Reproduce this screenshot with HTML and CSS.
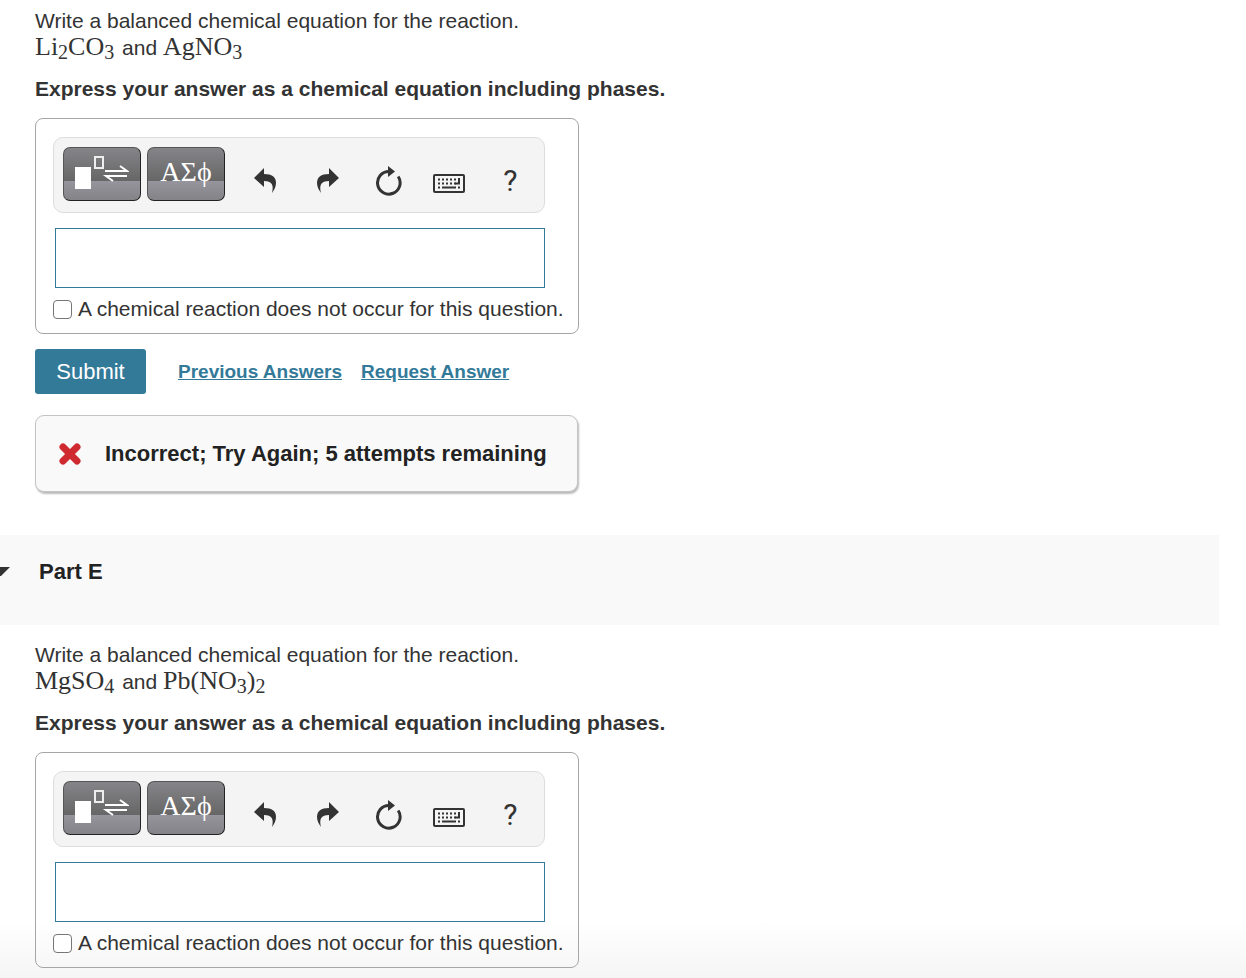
FILE: index.html
```
<!DOCTYPE html>
<html lang="en">
<head>
  <meta charset="UTF-8">
  <title>Part D and Part E</title>
  <link rel="stylesheet" href="styles.css">
</head>
<body>
  <!-- shared toolbar icons -->
  <svg class="sprite" aria-hidden="true">
    <symbol id="icon-template" viewBox="0 0 54 36">
      <rect x="0" y="11" width="16" height="22" fill="#fff"/>
      <rect x="20" y="1" width="8" height="11" fill="none" stroke="#eee" stroke-width="2"/>
      <path d="M30 15H52L45 10M52 20H31L38 25" fill="none" stroke="#fff" stroke-width="2"/>
    </symbol>
    <symbol id="icon-undo" viewBox="0 0 24 26">
      <path d="M0 10L10 0V6C18 6 22 9 22 15C22 19 20 22 18 25C20 17 18 13 10 13V19Z"/>
    </symbol>
    <symbol id="icon-redo" viewBox="0 0 24 26">
      <path d="M24 10L14 0V6C6 6 2 9 2 15C2 19 4 22 6 25C4 17 6 13 14 13V19Z"/>
    </symbol>
    <symbol id="icon-reset" viewBox="0 0 28 30">
      <path d="M15 5.500A11.300 11.300 0 1 0 24.200 10.500" fill="none" stroke="#333" stroke-width="3"/>
      <path d="M14 0L21 5.500L14 11Z"/>
    </symbol>
    <symbol id="icon-keyboard" viewBox="0 0 32 24">
      <rect x="1" y="6" width="30" height="17" rx="1" fill="none" stroke="#333" stroke-width="2"/>
      <path d="M5 10.500H24M5 14.500H23M5 18.500H7M25 18.500H27" fill="none" stroke="#333" stroke-width="2" stroke-dasharray="2 2"/>
      <path d="M9 18.500H23M26 9V14.500H22" fill="none" stroke="#333" stroke-width="2"/>
    </symbol>
  </svg>

  <section class="part">
    <p class="prompt">Write a balanced chemical equation for the reaction.</p>
    <p class="prompt"><span class="formula">Li<sub>2</sub>CO<sub>3</sub></span> and <span class="formula">AgNO<sub>3</sub></span></p>
    <p class="instructions">Express your answer as a chemical equation including phases.</p>

    <div class="answer-box">
      <div class="toolbar">
        <button class="palette" aria-label="Templates"><svg class="template"><use href="#icon-template"/></svg></button>
        <button class="palette greek">ΑΣϕ</button>
        <div class="tools">
          <button class="tool" aria-label="Undo"><svg class="arrow"><use href="#icon-undo"/></svg></button>
          <button class="tool" aria-label="Redo"><svg class="arrow"><use href="#icon-redo"/></svg></button>
          <button class="tool" aria-label="Reset"><svg class="reset"><use href="#icon-reset"/></svg></button>
          <button class="tool" aria-label="Keyboard shortcuts"><svg class="keyboard"><use href="#icon-keyboard"/></svg></button>
          <button class="tool help">?</button>
        </div>
      </div>
      <input class="answer" type="text" aria-label="Answer for Part D">
      <div class="no-reaction">
        <input type="checkbox" id="none-d">
        <label for="none-d">A chemical reaction does not occur for this question.</label>
      </div>
    </div>

    <div class="actions">
      <button class="submit">Submit</button>
      <a href="#">Previous Answers</a>
      <a href="#">Request Answer</a>
    </div>

    <div class="feedback">
      <svg class="cross" viewBox="0 0 22 22"><path d="M4 4L18 18M18 4L4 18" stroke="#cf2a2f" stroke-width="7" stroke-linecap="round"/></svg>
      <span>Incorrect; Try Again; 5 attempts remaining</span>
    </div>
  </section>

  <header class="part-header">
    <svg class="caret" viewBox="0 0 10 10"><path d="M0 0H10L1 9H0Z"/></svg>
    <h2>Part E</h2>
  </header>

  <section class="part">
    <p class="prompt">Write a balanced chemical equation for the reaction.</p>
    <p class="prompt"><span class="formula">MgSO<sub>4</sub></span> and <span class="formula">Pb(NO<sub>3</sub>)<sub>2</sub></span></p>
    <p class="instructions">Express your answer as a chemical equation including phases.</p>

    <div class="answer-box">
      <div class="toolbar">
        <button class="palette" aria-label="Templates"><svg class="template"><use href="#icon-template"/></svg></button>
        <button class="palette greek">ΑΣϕ</button>
        <div class="tools">
          <button class="tool" aria-label="Undo"><svg class="arrow"><use href="#icon-undo"/></svg></button>
          <button class="tool" aria-label="Redo"><svg class="arrow"><use href="#icon-redo"/></svg></button>
          <button class="tool" aria-label="Reset"><svg class="reset"><use href="#icon-reset"/></svg></button>
          <button class="tool" aria-label="Keyboard shortcuts"><svg class="keyboard"><use href="#icon-keyboard"/></svg></button>
          <button class="tool help">?</button>
        </div>
      </div>
      <input class="answer" type="text" aria-label="Answer for Part E">
      <div class="no-reaction">
        <input type="checkbox" id="none-e">
        <label for="none-e">A chemical reaction does not occur for this question.</label>
      </div>
    </div>
  </section>
</body>
</html>
```
FILE: styles.css
```
* {
  box-sizing: border-box;
}
body {
  margin: 0;
  min-height: 100vh;
  color: #333;
  font-family: "Liberation Sans", Arial, sans-serif;
  font-size: 21px;
  line-height: 27px;
  background: linear-gradient(#fff, #f5f5f5) bottom / 100% 56px no-repeat fixed #fff;
}
.sprite {
  display: none;
}
svg {
  display: block;
  fill: #333;
}
.part {
  padding: 7px 35px 0;
}
.part-header + .part {
  padding-top: 16px;
}
.prompt {
  margin: 0;
}
.formula {
  margin-right: 2px;
  font-family: "Liberation Serif", "Times New Roman", serif;
  font-size: 26px;
  line-height: 1;
}
.formula sub {
  font-size: 20px;
  line-height: 0;
  vertical-align: -4px;
}
.instructions {
  margin: 14px 0 16px;
  font-weight: bold;
}
.answer-box {
  max-width: 544px;
  padding: 18px 8px 11px 17px;
  border: 1px solid #a6a6a6;
  border-radius: 8px;
}
.toolbar {
  display: flex;
  gap: 6px;
  max-width: 492px;
  height: 76px;
  padding: 9px 3px 9px 9px;
  background: #f4f4f4;
  border: 1px solid #ddd;
  border-radius: 10px;
}
.palette {
  display: flex;
  align-items: center;
  justify-content: center;
  width: 78px;
  height: 54px;
  padding: 0;
  color: #fff;
  background: linear-gradient(#858589, #666 64%, #96949c 64%, #848388);
  border: 1px solid #555;
  border-right-color: #222;
  border-bottom-color: #222;
  border-radius: 7px;
}
.template {
  width: 54px;
  height: 36px;
}
.greek {
  padding-bottom: 4px;
  font-family: "Liberation Serif", "Times New Roman", serif;
  font-size: 28px;
}
.tools {
  display: flex;
  flex: 1;
  padding: 11px 0 0 4px;
}
.tool {
  display: flex;
  flex: 1;
  align-items: center;
  justify-content: center;
  padding: 0;
  color: #333;
  background: none;
  border: none;
}
.arrow {
  width: 24px;
  height: 26px;
}
.reset {
  width: 28px;
  height: 30px;
}
.keyboard {
  width: 32px;
  height: 24px;
}
.help {
  font-family: Roboto, Arial, sans-serif;
  font-size: 30px;
}
.answer {
  display: block;
  width: 490px;
  max-width: 100%;
  height: 60px;
  margin: 15px 0 7px 2px;
  padding: 0 10px;
  font-size: 21px;
  border: 1px solid #337a99;
}
.no-reaction {
  display: flex;
  align-items: center;
  gap: 6px;
}
.no-reaction input {
  appearance: none;
  width: 19px;
  height: 19px;
  margin: 2px 0 0;
  background: #fff;
  border: 1px solid #767676;
  border-radius: 4px;
}
.no-reaction input:checked {
  background: #337a99;
}
.actions {
  display: flex;
  align-items: center;
  gap: 19px;
  margin-top: 15px;
}
.submit {
  width: 111px;
  height: 45px;
  margin-right: 13px;
  color: #fff;
  font-family: inherit;
  font-size: 22px;
  background: #337a99;
  border: none;
  border-radius: 3px;
}
.actions a {
  color: #337a99;
  font-size: 19px;
  font-weight: bold;
}
.feedback {
  display: flex;
  align-items: center;
  gap: 24px;
  max-width: 543px;
  height: 77px;
  margin-top: 21px;
  padding: 0 23px;
  color: #222;
  font-size: 22px;
  font-weight: bold;
  background: #f9f9f9;
  border: 1px solid #c4c4c4;
  border-radius: 9px;
  box-shadow: 1px 2px 2px #bbb;
}
.cross {
  width: 22px;
  height: 22px;
}
.part-header {
  display: flex;
  align-items: flex-start;
  gap: 29px;
  height: 90px;
  margin: 43px 27px 0 0;
  padding-top: 23px;
  background: #f9f9f9;
}
.part-header h2 {
  margin: 0;
  color: #222;
  font-size: 22px;
}
.caret {
  width: 10px;
  height: 10px;
  margin-top: 9px;
}
```
